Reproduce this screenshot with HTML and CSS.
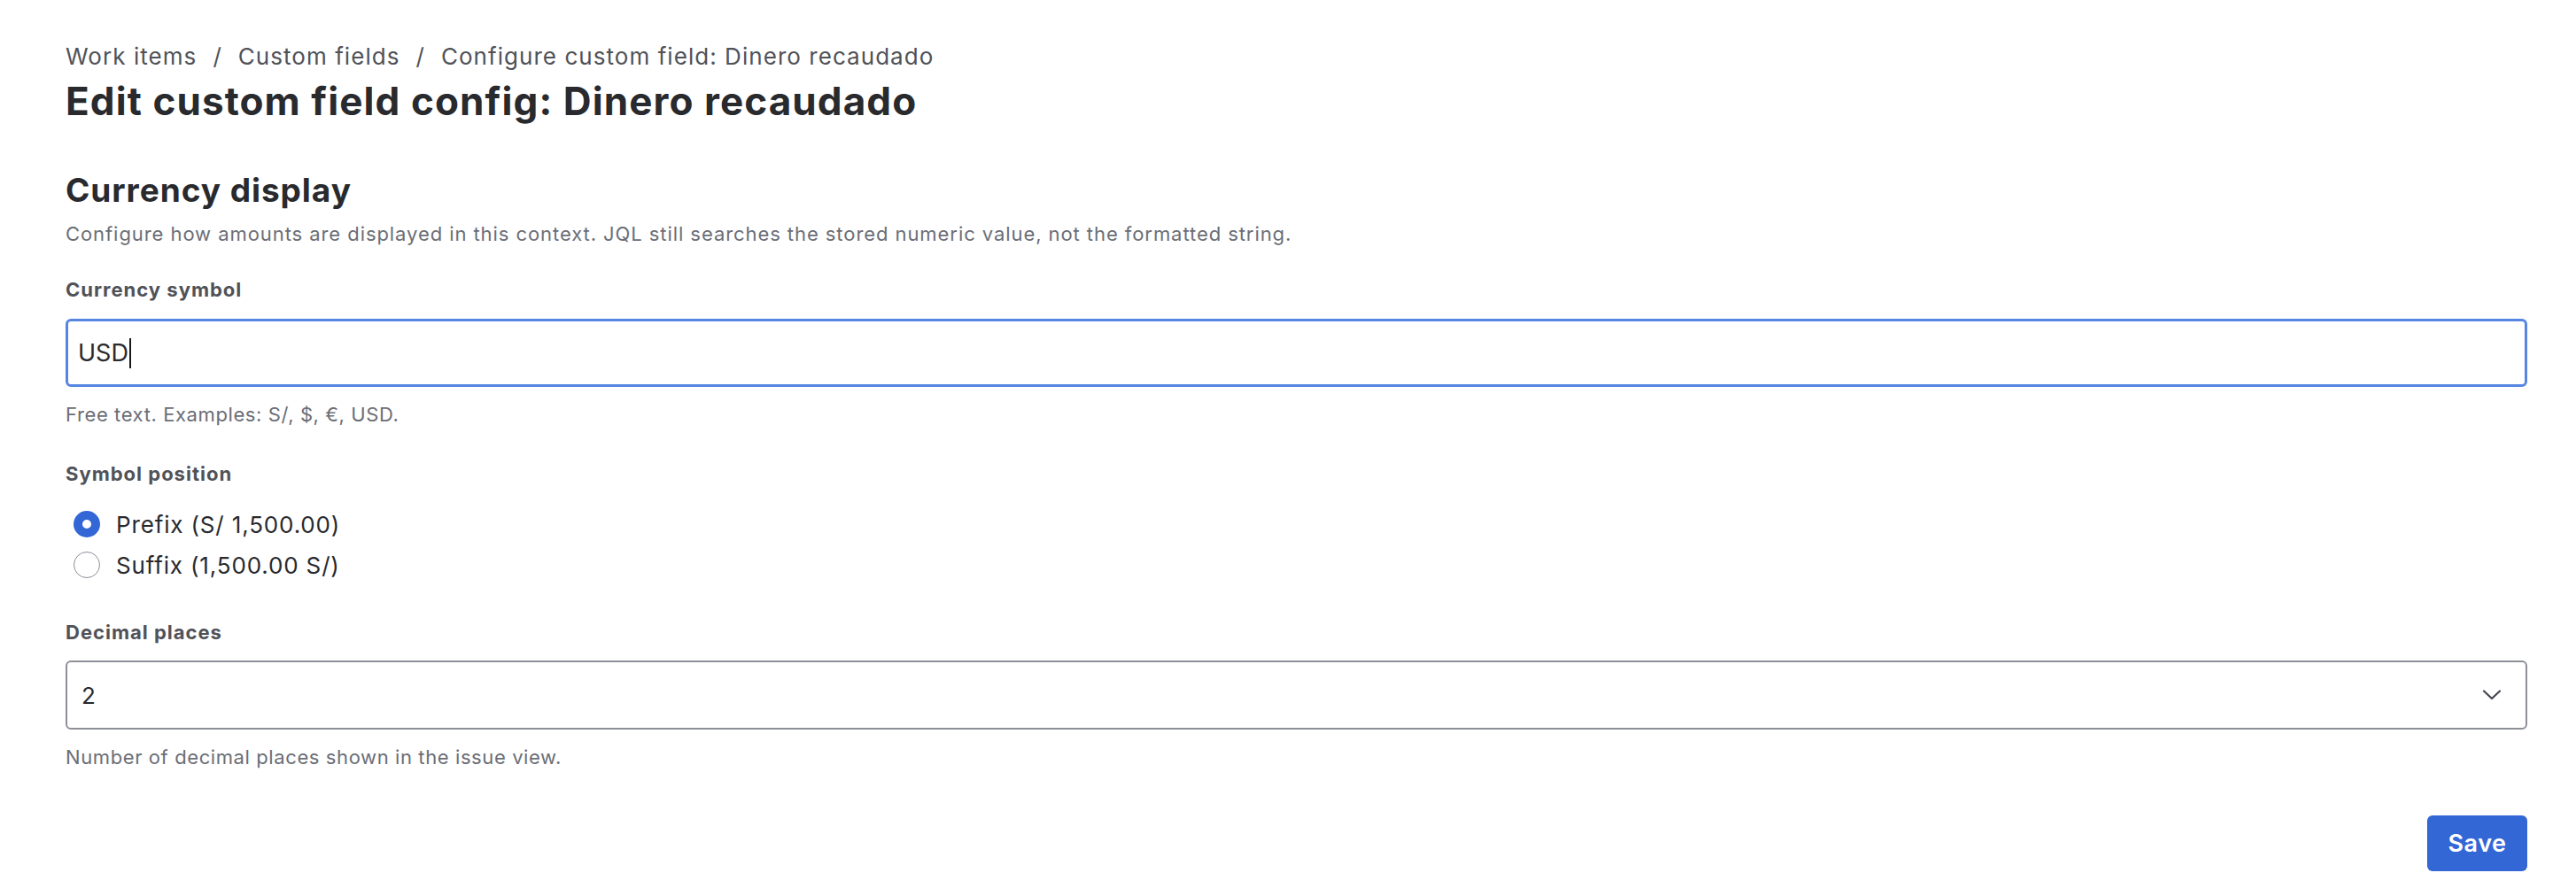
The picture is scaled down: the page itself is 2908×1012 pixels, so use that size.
FILE: index.html
```html
<!DOCTYPE html>
<html lang="en">
<head>
<meta charset="UTF-8">
<meta name="viewport" content="width=device-width, initial-scale=1.0">
<title>Edit custom field config: Dinero recaudado</title>
<link rel="stylesheet" href="styles.css">
</head>
<body>
<div class="page">
    <nav class="breadcrumbs">
        <a href="#">Work items</a>
        <span class="sep">/</span>
        <a href="#">Custom fields</a>
        <span class="sep">/</span>
        <a href="#">Configure custom field: Dinero recaudado</a>
    </nav>
    <h1 class="title">Edit custom field config: Dinero recaudado</h1>

    <form class="config-form" onsubmit="return false">
        <h2 class="section-title">Currency display</h2>
        <p class="section-desc">Configure how amounts are displayed in this context. JQL still searches the stored numeric value, not the formatted string.</p>

        <div class="field">
            <label class="field-label">Currency symbol</label>
            <div class="text-input focused">USD<span class="caret"></span></div>
            <div class="help">Free text. Examples: S/, $, €, USD.</div>
        </div>

        <div class="field">
            <label class="field-label">Symbol position</label>
            <div class="radio-group">
                <div class="radio-row">
                    <span class="radio checked"></span>
                    <span class="radio-text">Prefix (S/ 1,500.00)</span>
                </div>
                <div class="radio-row">
                    <span class="radio"></span>
                    <span class="radio-text">Suffix (1,500.00 S/)</span>
                </div>
            </div>
        </div>

        <div class="field">
            <label class="field-label">Decimal places</label>
            <div class="select">
                <span>2</span>
                <svg class="chevron" width="22" height="12" viewBox="0 0 22 12"><path d="M2 1.5 L11 10 L20 1.5" fill="none" stroke="#44474e" stroke-width="2.2" stroke-linecap="round" stroke-linejoin="round"/></svg>
            </div>
            <div class="help">Number of decimal places shown in the issue view.</div>
        </div>

        <div class="actions">
            <button type="submit" class="save-btn">Save</button>
        </div>
    </form>
</div>
</body>
</html>
```

FILE: styles.css
```css
body {
    margin: 0;
    font-family: Inter, "Noto Sans", sans-serif;
    background-color: #fff;
    color: #292a2e;
}
.page {
    padding: 48px 55px 20px 74px;
}
.breadcrumbs {
    display: flex;
    align-items: center;
    font-size: 26px;
    line-height: 32px;
    letter-spacing: 1.05px;
    color: #505258;
}
.breadcrumbs a {
    color: #505258;
    text-decoration: none;
}
.breadcrumbs .sep {
    margin: 0 18px;
}
.title {
    margin: 8px 0 0;
    font-size: 44px;
    line-height: 52px;
    font-weight: 700;
    letter-spacing: 1.1px;
    color: #292a2e;
}
.config-form {
    display: flex;
    flex-direction: column;
}
.section-title {
    margin: 53px 0 0;
    font-size: 37px;
    line-height: 44px;
    font-weight: 700;
    letter-spacing: 0.95px;
    color: #292a2e;
}
.section-desc {
    margin: 12px 0 0;
    font-size: 22px;
    line-height: 30px;
    letter-spacing: 0.93px;
    color: #6b6e76;
}
.field {
    display: flex;
    flex-direction: column;
    margin-top: 34px;
}
.field + .field {
    margin-top: 39px;
}
.field-label {
    font-size: 22px;
    line-height: 28px;
    font-weight: 700;
    letter-spacing: 1px;
    color: #505258;
}
.text-input {
    margin-top: 19px;
    height: 77px;
    box-sizing: border-box;
    display: flex;
    align-items: center;
    padding: 0 11px;
    border: 3px solid #5686e1;
    border-radius: 6px;
    font-size: 27px;
    color: #292a2e;
}
.caret {
    display: inline-block;
    width: 2px;
    height: 34px;
    margin-left: 1px;
    background-color: #1a1a1a;
}
.help {
    margin-top: 17px;
    font-size: 22px;
    line-height: 28px;
    letter-spacing: 0.6px;
    color: #6b6e76;
}
.radio-group {
    margin-top: 20px;
    display: flex;
    flex-direction: column;
}
.radio-row {
    display: flex;
    align-items: center;
    height: 46px;
    font-size: 26px;
    letter-spacing: 0.85px;
    color: #292a2e;
}
.radio {
    width: 30px;
    height: 30px;
    box-sizing: border-box;
    border-radius: 50%;
    border: 1.5px solid #8c8f97;
    background-color: #fff;
    margin-left: 9px;
    margin-right: 18px;
}
.radio.checked {
    border: 10px solid #3367d6;
    background-color: #fff;
}
.select {
    margin-top: 18px;
    height: 78px;
    box-sizing: border-box;
    display: flex;
    align-items: center;
    justify-content: space-between;
    padding: 0 27px 0 16px;
    border: 2px solid #8c8f97;
    border-radius: 6px;
    font-size: 26px;
    color: #292a2e;
}
.chevron {
    display: block;
}
.actions {
    display: flex;
    justify-content: flex-end;
    margin-top: 52px;
}
.save-btn {
    width: 113px;
    height: 63px;
    border: none;
    border-radius: 6px;
    background-color: #3367d6;
    color: #fff;
    font-family: Inter, "Noto Sans", sans-serif;
    font-size: 27px;
    font-weight: 600;
    letter-spacing: 0.5px;
    cursor: pointer;
}
.save-btn:hover {
    background-color: #2a58bd;
}
```
